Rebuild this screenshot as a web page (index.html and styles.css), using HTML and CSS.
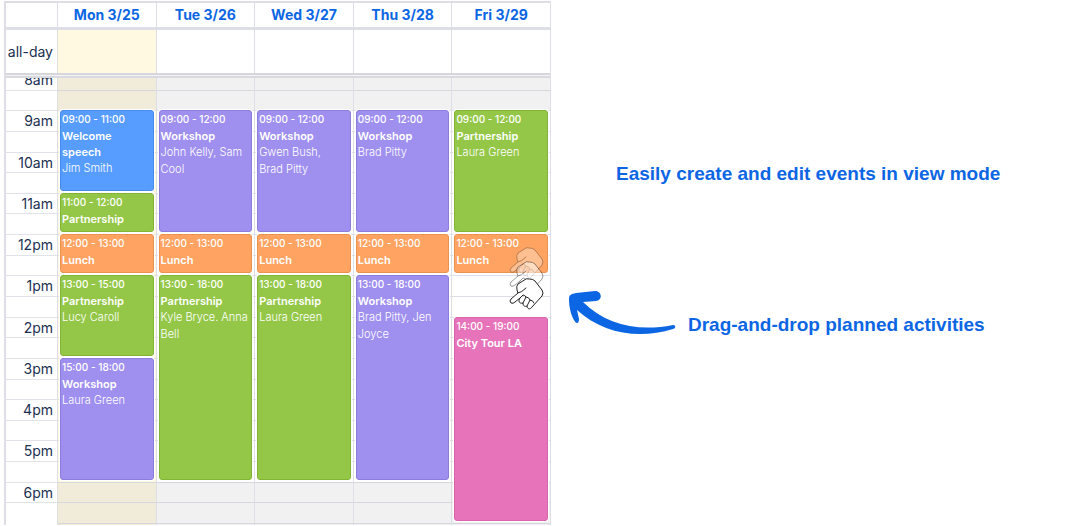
FILE: index.html
```
<!DOCTYPE html>
<html lang="en">
<head>
<meta charset="utf-8">
<title>Event calendar</title>
<link rel="stylesheet" href="styles.css">
</head>
<body>
<main class="page">
  <section class="calendar" aria-label="Week calendar">
    <div class="row head">
      <div class="axis"></div>
      <div class="day-name">Mon 3/25</div>
      <div class="day-name">Tue 3/26</div>
      <div class="day-name">Wed 3/27</div>
      <div class="day-name">Thu 3/28</div>
      <div class="day-name">Fri 3/29</div>
    </div>
    <div class="row all-day">
      <div class="axis">all-day</div>
      <div class="cell today"></div>
      <div class="cell"></div>
      <div class="cell"></div>
      <div class="cell"></div>
      <div class="cell"></div>
    </div>
    <div class="divider"></div>
    <div class="scroller">
      <div class="row body">
        <div class="slots hours">
          <span>8am</span><span></span><span>9am</span><span></span><span>10am</span><span></span>
          <span>11am</span><span></span><span>12pm</span><span></span><span>1pm</span><span></span>
          <span>2pm</span><span></span><span>3pm</span><span></span><span>4pm</span><span></span>
          <span>5pm</span><span></span><span>6pm</span><span></span>
        </div>
        <div class="slots day today">
          <i class="closed morning"></i><i class="closed evening"></i>
          <article class="event blue from-9 to-11"><time>09:00 - 11:00</time><h3>Welcome speech</h3><p>Jim Smith</p></article>
          <article class="event green from-11 to-12"><time>11:00 - 12:00</time><h3>Partnership</h3></article>
          <article class="event orange from-12 to-13"><time>12:00 - 13:00</time><h3>Lunch</h3></article>
          <article class="event green from-13 to-15"><time>13:00 - 15:00</time><h3>Partnership</h3><p>Lucy Caroll</p></article>
          <article class="event purple from-15 to-18"><time>15:00 - 18:00</time><h3>Workshop</h3><p>Laura Green</p></article>
        </div>
        <div class="slots day">
          <i class="closed morning"></i><i class="closed evening"></i>
          <article class="event purple from-9 to-12"><time>09:00 - 12:00</time><h3>Workshop</h3><p>John Kelly, Sam Cool</p></article>
          <article class="event orange from-12 to-13"><time>12:00 - 13:00</time><h3>Lunch</h3></article>
          <article class="event green from-13 to-18"><time>13:00 - 18:00</time><h3>Partnership</h3><p>Kyle Bryce. Anna Bell</p></article>
        </div>
        <div class="slots day">
          <i class="closed morning"></i><i class="closed evening"></i>
          <article class="event purple from-9 to-12"><time>09:00 - 12:00</time><h3>Workshop</h3><p>Gwen Bush,<br>Brad Pitty</p></article>
          <article class="event orange from-12 to-13"><time>12:00 - 13:00</time><h3>Lunch</h3></article>
          <article class="event green from-13 to-18"><time>13:00 - 18:00</time><h3>Partnership</h3><p>Laura Green</p></article>
        </div>
        <div class="slots day">
          <i class="closed morning"></i><i class="closed evening"></i>
          <article class="event purple from-9 to-12"><time>09:00 - 12:00</time><h3>Workshop</h3><p>Brad Pitty</p></article>
          <article class="event orange from-12 to-13"><time>12:00 - 13:00</time><h3>Lunch</h3></article>
          <article class="event purple from-13 to-18"><time>13:00 - 18:00</time><h3>Workshop</h3><p>Brad Pitty, Jen Joyce</p></article>
        </div>
        <div class="slots day">
          <i class="closed morning"></i><i class="closed evening"></i>
          <article class="event green from-9 to-12"><time>09:00 - 12:00</time><h3>Partnership</h3><p>Laura Green</p></article>
          <article class="event orange from-12 to-13"><time>12:00 - 13:00</time><h3>Lunch</h3></article>
          <article class="event pink from-14 to-19"><time>14:00 - 19:00</time><h3>City Tour LA</h3></article>
          <svg class="pointer" viewBox="0 0 36 64" aria-hidden="true">
            <defs>
              <path id="hand" d="M17 1 L9 6 Q7 8 8 12 L9 15 L2 21 Q0 23 2 25 Q4 26 6 24 L11 20 C9 23 10 26 14 25 C14 28 16 29 18 28 C18 31 21 32 23 29 L33 18 Q35 15 33 12 L26 3 Q24 1 21 1 Z M9 15 Q12 15 17 10 M11 20 L14 17 Q16 17 17 19 L14 25 M17 19 Q20 19 21 22 L18 28 M21 22 Q24 22 25 25"/>
            </defs>
            <use href="#hand" class="ghost far"/>
            <use href="#hand" y="14" class="ghost near"/>
            <use href="#hand" y="31" class="solid"/>
          </svg>
        </div>
      </div>
    </div>
  </section>
  <section class="notes">
    <p class="note">Easily create and edit events in view mode</p>
    <div class="drag">
      <svg class="arrow" viewBox="0 0 108 46" aria-hidden="true">
        <path d="M1 8 C1 4 3 3 8 2 L27 0 C34 0 35 9 28 10 L15 11 C38 34 70 41 105 34 C108 34 108 37 105 38 C70 49 34 42 9 19 L11 28 C11 33 8 33 6 29 C3 24 1 16 1 8 Z"/>
      </svg>
      <p class="note">Drag-and-drop planned activities</p>
    </div>
  </section>
</main>
</body>
</html>
```
FILE: styles.css
```
* { box-sizing: border-box; }
body { margin: 0; background: #fff; font-family: Inter, "Liberation Sans", sans-serif; color: #1b2f52; }
h3, p { margin: 0; }

.page { display: grid; grid-template-columns: 547fr 524fr; padding: 1px 0 0 4px; }

.calendar { border: 2px solid #dedee6; border-right-width: 1px; border-bottom: 0; }
.row { display: grid; grid-template-columns: 51px repeat(5, minmax(0, 1fr)); }
.row > * + * { border-left: 1px solid #dedee6; }
.head { height: 27px; border-bottom: 3px solid #dedee6; font-size: 14px; line-height: 24px; }
.day-name { text-align: center; font-weight: 700; color: #0c66e4; }
.all-day { height: 43px; font-size: 14px; }
.all-day .axis { line-height: 43px; text-align: right; padding-right: 4px; }
.all-day .today { background: #fff9e2; }
.divider { height: 5px; background: #f3f3f5; border-top: 2px solid #d6d6dc; border-bottom: 2px solid #d9d9df; }

.scroller { overflow: hidden; }
.body { height: 456px; margin-top: -9px; grid-template-rows: minmax(0, 1fr); }
.slots { display: grid; grid-template-rows: repeat(22, minmax(0, 1fr)); padding-bottom: 2px; }
.hours { font-size: 14px; line-height: 20px; text-align: right; }
.hours span { border-top: 1px solid #e2e2ea; padding-right: 4px; }

.day { position: relative; background: repeating-linear-gradient(#dedee6 0 1px, transparent 1px calc(454px / 22)); }
.day.today { background-color: #fff9e2; }
.closed { grid-column: 1; background: rgba(180, 180, 180, 0.18); }
.morning { grid-row: 1 / 3; }
.evening { grid-row: 21 / 23; margin-bottom: -2px; }

.event { grid-column: 1; margin: 0 2px 2px; padding: 0 1px; border: 1px solid; border-radius: 3px; box-shadow: 0 0 0 1px #fff; color: #fff; font-size: 11px; line-height: 17px; overflow: hidden; z-index: 1; }
.event time { display: block; font-size: 10px; font-weight: 500; }
.event h3 { font-size: 11px; line-height: 16px; font-weight: 600; }
.event p { font-weight: 300; }
.blue { background: #579dff; border-color: #468be9; }
.green { background: #94c748; border-color: #82b536; }
.orange { background: #fea362; border-color: #ec924f; }
.purple { background: #9f8fef; border-color: #8c7cdd; }
.pink { background: #e774bb; border-color: #d864aa; }

.from-9 { grid-row-start: 3; }
.from-11 { grid-row-start: 7; }
.from-12 { grid-row-start: 9; }
.from-13 { grid-row-start: 11; }
.from-14 { grid-row-start: 13; }
.from-15 { grid-row-start: 15; }
.to-11 { grid-row-end: 7; }
.to-12 { grid-row-end: 9; }
.to-13 { grid-row-end: 11; }
.to-15 { grid-row-end: 15; }
.to-18 { grid-row-end: 21; }
.to-19 { grid-row-end: 23; }

.pointer { position: absolute; right: 5px; top: 178px; width: 36px; height: 64px; z-index: 2; fill: #fff; stroke: #222; stroke-width: 1; stroke-linejoin: round; stroke-linecap: round; }
.far { opacity: 0.3; }
.near { opacity: 0.45; }

.notes { padding: 161px 0 0 65px; font-family: "Liberation Sans", Arial, sans-serif; color: #0c66e4; }
.note { font-size: 19px; line-height: 24px; font-weight: 700; }
.drag { display: flex; align-items: flex-end; gap: 12px; margin: 105px 0 0 -48px; }
.arrow { flex: none; width: 108px; height: 46px; fill: #0c66e4; }
```
